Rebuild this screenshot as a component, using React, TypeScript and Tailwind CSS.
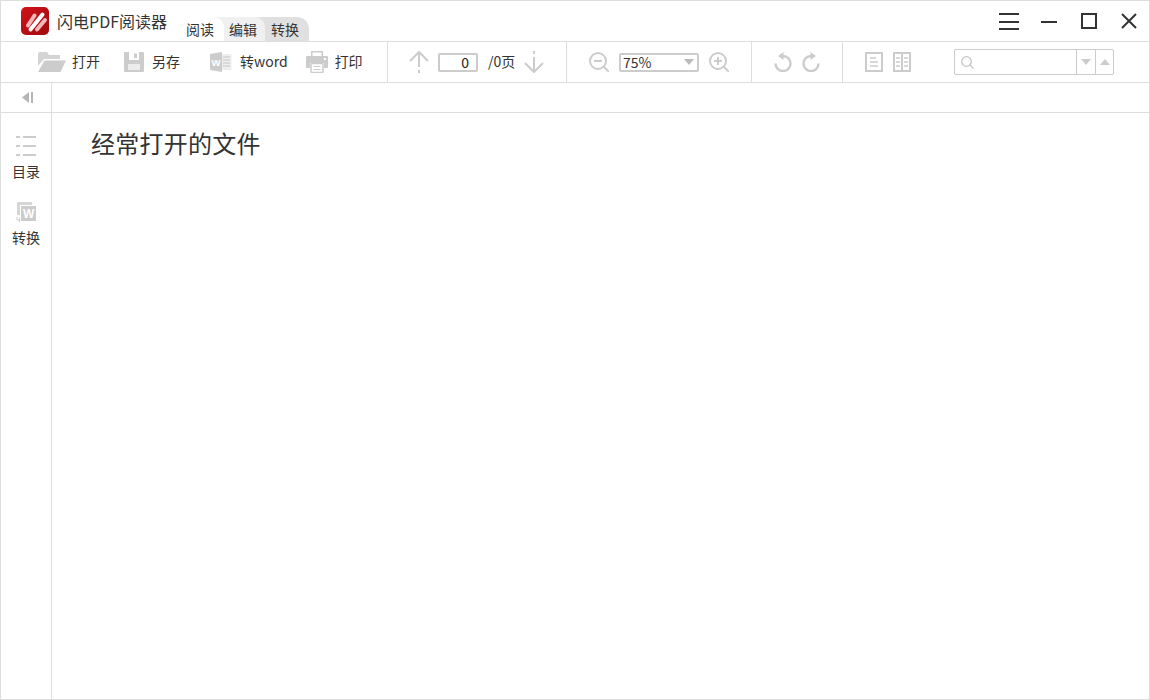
const cjk = "font-['Noto_Sans_CJK_SC','Noto_Sans',sans-serif]"

function Logo() {
  return (
    <svg width="28" height="28" viewBox="0 0 28 28" className="shrink-0">
      <defs>
        <linearGradient id="logoBg" x1="0" y1="0" x2="1" y2="1">
          <stop offset="0" stopColor="#d0141a" />
          <stop offset="1" stopColor="#a00a0e" />
        </linearGradient>
      </defs>
      <rect width="28" height="28" rx="5" fill="url(#logoBg)" />
      <path d="M7 18.5 L13.5 8.5" stroke="#f2b8b8" strokeWidth="4" strokeLinecap="round" />
      <path d="M9.5 22.5 L21.5 7.5" stroke="#ffffff" strokeWidth="4" strokeLinecap="round" />
      <path d="M16 22.5 L24 13" stroke="#f2b8b8" strokeWidth="4" strokeLinecap="round" />
    </svg>
  )
}

function FolderIcon() {
  return (
    <svg width="28" height="20" viewBox="0 0 28 20" className="shrink-0">
      <path d="M0 2 Q0 0 2 0 H9 L11 3 H22 V7 H6 L0 14 Z" fill="#d4d4d4" />
      <path d="M6.5 8.5 H28 L22.5 20 H0 Z" fill="#cccccc" />
    </svg>
  )
}

function SaveIcon() {
  return (
    <svg width="20" height="20" viewBox="0 0 20 20" className="shrink-0">
      <path
        fillRule="evenodd"
        d="M1 0 H19 Q20 0 20 1 V19 Q20 20 19 20 H1 Q0 20 0 19 V1 Q0 0 1 0 Z M5 0 V8 H15 V0 Z M4 12 V18 H16 V12 Z"
        fill="#cccccc"
      />
      <rect x="10" y="1.5" width="3" height="4.5" fill="#cccccc" />
      <rect x="4" y="12" width="12" height="6" fill="#ececec" />
    </svg>
  )
}

function WordIcon() {
  return (
    <svg width="22" height="20" viewBox="0 0 22 20" className="shrink-0">
      <path d="M0 2 L12 0 V20 L0 18 Z" fill="#cccccc" />
      <path d="M12 2 H21.5 V18 H12 Z" fill="#eeeeee" />
      <path d="M13 5 H20 M13 8 H20 M13 11 H20 M13 14 H20" stroke="#c6c6c6" strokeWidth="1" />
      <text x="1.5" y="13.5" fontSize="9.5" fontWeight="700" fill="#ffffff" fontFamily="Liberation Sans">W</text>
    </svg>
  )
}

function PrintIcon() {
  return (
    <svg width="22" height="22" viewBox="0 0 22 22" className="shrink-0">
      <path d="M5.75 5.5 V0.75 H16.25 V5.5" fill="none" stroke="#cccccc" strokeWidth="1.5" />
      <path d="M1 5 H21 Q22 5 22 6 V16 Q22 17 21 17 H18 V12 H4 V17 H1 Q0 17 0 16 V6 Q0 5 1 5 Z" fill="#cccccc" />
      <rect x="5" y="12.5" width="12" height="9" rx="1" fill="#ffffff" stroke="#cccccc" strokeWidth="1.5" />
      <path d="M7.5 15.5 H14.5 M7.5 18.5 H14.5" stroke="#cccccc" strokeWidth="1" />
      <rect x="18" y="7" width="2" height="2" fill="#ffffff" />
    </svg>
  )
}

function ArrowUp() {
  return (
    <svg width="20" height="22" viewBox="0 0 20 22" fill="none" stroke="#cccccc" strokeWidth="2" className="shrink-0">
      <path d="M1 10 L10 1 L19 10 M10 1 V16 M10 19 V22" />
    </svg>
  )
}

function ArrowDown() {
  return (
    <svg width="20" height="22" viewBox="0 0 20 22" fill="none" stroke="#cccccc" strokeWidth="2" className="shrink-0">
      <path d="M10 0 V3 M10 6 V21 M1 12 L10 21 L19 12" />
    </svg>
  )
}

function Magnifier({ plus }: { plus?: boolean }) {
  return (
    <svg width="20" height="20" viewBox="0 0 20 20" fill="none" stroke="#cccccc" strokeWidth="2" className="shrink-0">
      <circle cx="9" cy="9" r="8" />
      <path d="M15 15 L20 20 M5 9 H13" />
      {plus && <path d="M9 5 V13" />}
    </svg>
  )
}

function Undo({ flip }: { flip?: boolean }) {
  return (
    <svg width="18" height="20" viewBox="0 0 18 20" fill="none" className={flip ? "shrink-0 -scale-x-100" : "shrink-0"}>
      <path d="M9 4 A7.5 7.5 0 1 1 1.5 11.5" stroke="#cccccc" strokeWidth="2.4" />
      <path d="M9.5 0 V8 L4 4 Z" fill="#cccccc" />
    </svg>
  )
}

function SinglePage() {
  return (
    <svg width="18" height="20" viewBox="0 0 18 20" fill="none" stroke="#cccccc" className="shrink-0">
      <rect x="1" y="1" width="16" height="18" strokeWidth="2" />
      <path d="M5 6 H11 M5 10 H13 M5 14 H13" strokeWidth="1.6" />
    </svg>
  )
}

function DoublePage() {
  return (
    <svg width="18" height="20" viewBox="0 0 18 20" fill="none" stroke="#cccccc" className="shrink-0">
      <rect x="1" y="1" width="16" height="18" strokeWidth="2" />
      <path d="M9 1 V19" strokeWidth="2" />
      <path d="M3 6 H7 M3 10 H7 M3 14 H7 M11 6 H15 M11 10 H15 M11 14 H15" strokeWidth="1.6" />
    </svg>
  )
}

function TocIcon() {
  return (
    <svg width="20" height="20" viewBox="0 0 20 20" fill="#cccccc" className="shrink-0">
      <path d="M0 0 H4 V2 H0 Z M7 0 H20 V2 H7 Z M0 9 H4 V11 H0 Z M7 9 H20 V11 H7 Z M0 18 H4 V20 H0 Z M7 18 H20 V20 H7 Z" />
    </svg>
  )
}

function ConvertIcon() {
  return (
    <svg width="20" height="20" viewBox="0 0 20 20" className="shrink-0">
      <path d="M1 0 H16 V3 H4 V13 H1 Z" fill="#d6d6d6" />
      <rect x="5" y="4" width="15" height="15" fill="#cccccc" />
      <text x="7" y="16" fontSize="12" fontWeight="700" fill="#ffffff" fontFamily="Liberation Sans">W</text>
      <path d="M1 15 V18 H4 M3.5 15.5 V20" stroke="#cccccc" strokeWidth="1" fill="none" />
    </svg>
  )
}

function ToolButton({ icon, label, className }: { icon: React.ReactNode; label: string; className: string }) {
  return (
    <button className={`flex items-center text-[14px] text-[#333] ${className}`}>
      {icon}
      <span className="pb-[2px]">{label}</span>
    </button>
  )
}

export default function App() {
  return (
    <div className={`flex h-[700px] w-[1150px] flex-col overflow-hidden border border-[#dddddd] bg-white text-[#333] ${cjk}`}>
      {/* Title bar */}
      <div className="flex h-[41px] shrink-0 border-b border-[#dddddd]">
        <div className="ml-[20px] mt-[6px]">
          <Logo />
        </div>
        <span className="ml-[8px] mt-[9px] text-[16px] leading-[22px] text-[#333]">闪电PDF阅读器</span>
        {/* Tabs */}
        <div className="ml-[13px] mt-[16px] flex h-[24px] text-[14px] leading-[24px]">
          <div className="w-[44px] bg-[#f0f0f0]">
            <div className="h-full rounded-tr-[10px] bg-white pl-[6px]">阅读</div>
          </div>
          <div className="w-[41px] bg-[#e0e0e0]">
            <div className="h-full rounded-tr-[10px] bg-[#f0f0f0] pl-[5px]">编辑</div>
          </div>
          <div className="w-[44px] rounded-tr-[12px] bg-[#e0e0e0] pl-[6px]">转换</div>
        </div>
        {/* Window controls */}
        <div className="ml-auto mr-[12px] mt-[12px] flex h-[16px] items-start">
          <div className="flex h-[17px] w-[20px] flex-col justify-between">
            <div className="h-[2px] bg-[#333]" />
            <div className="h-[2px] bg-[#333]" />
            <div className="h-[2px] bg-[#333]" />
          </div>
          <div className="ml-[22px] mt-[8px] h-[2px] w-[16px] bg-[#333]" />
          <div className="ml-[24px] h-[16px] w-[16px] border-2 border-[#333]" />
          <svg width="16" height="16" viewBox="0 0 16 16" className="ml-[24px]" stroke="#333" strokeWidth="2" fill="none">
            <path d="M1 1 L15 15 M15 1 L1 15" />
          </svg>
        </div>
      </div>

      {/* Toolbar */}
      <div className="flex h-[41px] shrink-0 border-b border-[#dddddd]">
        <div className="flex w-[387px] shrink-0 items-center border-r border-[#dddddd] pl-[37px]">
          <ToolButton icon={<FolderIcon />} label="打开" className="gap-[6px]" />
          <ToolButton icon={<SaveIcon />} label="另存" className="ml-[24px] gap-[8px]" />
          <ToolButton icon={<WordIcon />} label="转word" className="ml-[30px] gap-[8px]" />
          <ToolButton icon={<PrintIcon />} label="打印" className="ml-[18px] gap-[7px]" />
        </div>
        <div className="flex w-[179px] shrink-0 items-center border-r border-[#dddddd] pl-[21px]">
          <ArrowUp />
          <div className="ml-[9px] h-[19px] w-[40px] rounded-[2px] border-2 border-[#cccccc] pr-[7px] text-right text-[14px] leading-[14px] text-[#222]">0</div>
          <span className="ml-[10px] pb-[2px] text-[14px]">/0页</span>
          <div className="ml-[9px]">
            <ArrowDown />
          </div>
        </div>
        <div className="flex w-[185px] shrink-0 items-center border-r border-[#dddddd] pl-[22px]">
          <Magnifier />
          <div className="ml-[10px] flex h-[19px] w-[80px] items-center justify-between rounded-[2px] border-2 border-[#cccccc] pl-[2px] pr-[3px] text-[14px] leading-[14px] text-[#333]">
            <span className="pb-[1px]">75%</span>
            <svg width="10" height="6" viewBox="0 0 10 6" fill="#bbbbbb">
              <path d="M0 0 H10 L5 6 Z" />
            </svg>
          </div>
          <div className="ml-[10px]">
            <Magnifier plus />
          </div>
        </div>
        <div className="flex w-[91px] shrink-0 items-center gap-[10px] border-r border-[#dddddd] pl-[22px]">
          <Undo />
          <Undo flip />
        </div>
        <div className="flex flex-1 items-center pl-[22px]">
          <SinglePage />
          <div className="ml-[10px]">
            <DoublePage />
          </div>
          <div className="ml-[43px] flex h-[26px] w-[160px] rounded-[2px] border border-[#cccccc]">
            <div className="flex w-[122px] items-center border-r border-[#cccccc] pl-[6px]">
              <svg width="13" height="13" viewBox="0 0 13 13" fill="none" stroke="#c4c4c4" strokeWidth="1.3">
                <circle cx="5.5" cy="5.5" r="4.8" />
                <path d="M9 9 L12.5 12.5" />
              </svg>
            </div>
            <div className="flex w-[19px] items-center justify-center border-r border-[#cccccc]">
              <svg width="10" height="6" viewBox="0 0 10 6" fill="#cccccc">
                <path d="M0 0 H10 L5 6 Z" />
              </svg>
            </div>
            <div className="flex flex-1 items-center justify-center">
              <svg width="10" height="6" viewBox="0 0 10 6" fill="#cccccc">
                <path d="M0 6 H10 L5 0 Z" />
              </svg>
            </div>
          </div>
        </div>
      </div>

      {/* Body */}
      <div className="flex min-h-0 flex-1">
        <aside className="flex w-[51px] shrink-0 flex-col border-r border-[#dddddd]">
          <div className="flex h-[30px] shrink-0 items-center justify-center border-b border-[#dddddd]">
            <svg width="11" height="11" viewBox="0 0 11 11" fill="#b5b5b5" className="ml-[2px]">
              <path d="M7 0 V11 L0 5.5 Z" />
              <rect x="9" y="0" width="2" height="11" />
            </svg>
          </div>
          <div className="flex flex-col items-center pt-[23px] text-[14px] leading-[18px] text-[#333]">
            <TocIcon />
            <span className="mt-[6px]">目录</span>
            <div className="mt-[22px]">
              <ConvertIcon />
            </div>
            <span className="mt-[6px]">转换</span>
          </div>
        </aside>
        <main className="flex-1">
          <div className="h-[30px] border-b border-[#dddddd]" />
          <h1 className="ml-[39px] mt-[13px] text-[24px] font-normal leading-[34px] tracking-[0.25px] text-[#333]">经常打开的文件</h1>
        </main>
      </div>
    </div>
  )
}
